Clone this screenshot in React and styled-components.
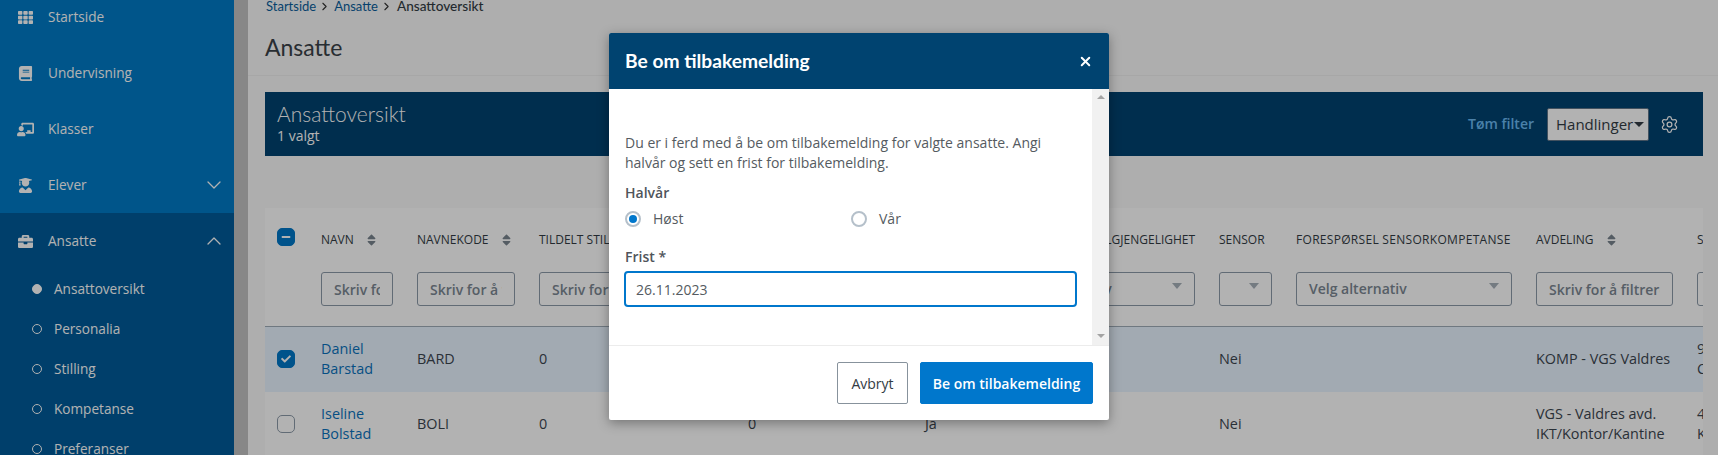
import React from 'react';
import styled, { createGlobalStyle } from 'styled-components';
import { FaTh, FaBook, FaChalkboardTeacher, FaUserGraduate, FaBriefcase, FaSort, FaCheck, FaMinus } from 'react-icons/fa';
import { ChevronDown, ChevronUp, ChevronRight, Settings, X } from 'lucide-react';

const BODY = `"Open Sans", "Noto Sans", sans-serif`;
const HEAD = `Lato, "Open Sans", sans-serif`;

const Global = createGlobalStyle`
  html, body { margin: 0; padding: 0; height: 455px; overflow: hidden; background: #f9f9f9; }
  #root { height: 455px; }
  * { box-sizing: border-box; }
`;

const Page = styled.div`
  position: relative; display: flex; width: 1718px; height: 455px; overflow: hidden;
  font-family: ${BODY}; font-size: 14px; line-height: 20px; color: #3c4650;
`;
const Sidebar = styled.nav`
  flex: 0 0 234px; background: #007ac6; color: #fff; overflow: hidden; display: flex; flex-direction: column;
`;
const NavList = styled.div` margin-top: -11px; display: flex; flex-direction: column; flex: none; `;
const NavItem = styled.div`
  height: 56px; display: flex; align-items: center; padding: 0 8px 0 17px; flex: none; font-size: 13.6px;
  svg.lead { width: 17px; height: 15px; margin-right: 14px; flex: none; }
  span { flex: 1; }
`;
const NavGroup = styled.div` background: #005b9a; display: flex; flex-direction: column; height: 300px; flex: none; `;
const SubItem = styled.div`
  height: 40px; display: flex; align-items: center; padding-left: 32px; gap: 12px; font-size: 13.6px; flex: none;
`;
const Bullet = styled.i`
  width: 10px; height: 10px; border-radius: 50%; border: 1.5px solid #fff; flex: none;
  background: ${p => (p.$on ? '#fff' : 'transparent')};
`;
const Gutter = styled.div` flex: 0 0 14px; background: #c2c2c2; `;
const Main = styled.main` flex: 1; min-width: 0; display: flex; flex-direction: column; overflow: hidden; `;
const Crumbs = styled.div`
  flex: none; height: 12px; padding-left: 18px; display: flex; align-items: center; font-family: ${HEAD}; font-size: 13px; color: #333c44;
  a { color: #0a5e9c; }
  svg { margin: 0 3px 0 2px; color: #333; flex: none; }
  b { font-weight: 500; font-size: 13.6px; margin-left: 1px; }
`;
const Title = styled.h1`
  flex: none; margin: 0; height: 64px; padding: 17px 0 0 17px; font-family: ${HEAD}; font-size: 23px; line-height: 36px; font-weight: 400;
  color: #3a4148; border-bottom: 1px solid #f0f0f0;
`;
const Content = styled.div` flex: none; padding: 16px 15px 0 17px; display: flex; flex-direction: column; gap: 52px; `;
const Banner = styled.section`
  height: 64px; flex: none; background: #004270; color: #fff; display: flex; align-items: center; padding: 0 24px 0 12px;
`;
const BannerText = styled.div`
  flex: 1; font-size: 14px;
  h2 { margin: 0; font-family: ${HEAD}; font-weight: 300; font-size: 21px; line-height: 24px; }
  p { margin: 0; line-height: 20px; }
`;
const ClearLink = styled.a` color: #6cb9f2; font-weight: 600; margin-right: 13px; font-size: 14px; `;
const ActionButton = styled.div`
  width: 102px; height: 33px; background: #fff; border: 1px solid #5f7588; border-radius: 2px; display: flex; align-items: center;
  justify-content: flex-start; padding-left: 8px; font-size: 15px; color: #333c44; margin-right: 11px;
  i { border: 5px solid transparent; border-top-color: #333c44; border-bottom: 0; margin-left: 1px; }
`;
const Panel = styled.section` background: #fff; overflow: hidden; height: 300px; flex: none; `;
const Table = styled.table`
  border-collapse: collapse; table-layout: fixed; width: 1600px; font-size: 14.4px; color: #3c4650;
`;
const Th = styled.th`
  height: 64px; padding: 0; text-align: left; font-size: 12px; white-space: nowrap; text-transform: uppercase;
  color: #333c44; vertical-align: middle; font-weight: 500; letter-spacing: ${p => p.$track || 0}px;
  svg { color: #79848e; margin-left: 12px; width: 11px; height: 14px; vertical-align: -3px; }
`;
const FilterCell = styled.td` height: 54px; padding: 0 24px 20px 0; vertical-align: top; border-bottom: 1px solid #a0acb8; `;
const FilterInput = styled.input`
  display: block; width: 100%; height: 34px; border: 1px solid #8c9aa8; border-radius: 3px; padding: 0 12px; background: #fff; outline: none;
  font-family: ${BODY}; font-size: 14px; font-weight: 600;
  &::placeholder { color: #7b8792; opacity: 1; }
`;
const FilterSelect = styled.div`
  height: 34px; border: 1px solid #8c9aa8; border-radius: 3px; padding: 0 12px; display: flex; align-items: center; justify-content: space-between;
  font-weight: 600; color: #7b8792; font-size: 14px;
  i { border: 5px solid transparent; border-top: 6px solid #a7b0b9; border-bottom: 0; margin: 0 0 6px auto; }
`;
const Row = styled.tr` background: ${p => (p.$on ? '#e9f4ff' : '#fff')}; `;
const Td = styled.td` height: 65px; padding: 0 12px 0 0; vertical-align: middle; line-height: 20px; `;
const CheckCell = styled.td` padding: 0 0 0 12px; vertical-align: middle; `;
const CheckHead = styled(Th)` padding: 0 0 6px 12px; `;
const Check = styled.span`
  display: flex; width: 18px; height: 18px; border-radius: 5px; align-items: center; justify-content: center;
  background: ${p => (p.$on ? '#0077c8' : '#fff')}; border: 1px solid ${p => (p.$on ? '#0077c8' : '#8c9aa8')};
  svg { color: #fff; width: 10px; height: 10px; margin: 0; vertical-align: baseline; }
`;
const NameLink = styled.a` color: #0a72bd; `;

const Overlay = styled.div` position: absolute; inset: 0; background: rgba(0, 0, 0, 0.3); `;
const Modal = styled.div`
  position: absolute; left: 609px; top: 33px; width: 500px; height: 387px; background: #fff; border-radius: 2px;
  box-shadow: 0 3px 12px rgba(0, 0, 0, 0.35); display: flex; flex-direction: column; overflow: hidden;
`;
const ModalHeader = styled.header`
  flex: none; height: 56px; background: #004370; color: #fff; display: flex; align-items: center; justify-content: space-between; padding: 0 16px;
  h3 { margin: 0; font-family: ${HEAD}; font-size: 19.2px; font-weight: 700; }
`;
const ModalBody = styled.div` flex: none; height: 256px; display: flex; `;
const ModalContent = styled.div` flex: 1; padding: 44px 15px 0 16px; color: #555b61; `;
const Para = styled.p` margin: 0 0 10px; `;
const Label = styled.div` font-weight: 600; color: #4f555b; height: 20px; `;
const RadioGroup = styled.div` display: grid; grid-template-columns: 1fr 1fr; margin: 6px 0 18px; height: 20px; `;
const Radio = styled.label`
  display: flex; align-items: center; gap: 12px;
  i { width: 16px; height: 16px; border-radius: 50%; border: 2px solid #b5c0ca; display: flex; align-items: center; justify-content: center; }
  i::after { content: ''; width: 8px; height: 8px; border-radius: 50%; background: ${p => (p.$on ? '#0077cc' : 'transparent')}; }
`;
const DateInput = styled.input`
  display: block; margin: 4px 0 0 -1px; width: calc(100% + 1px); height: 36px; border: 2px solid #0077cc; border-radius: 4px; padding: 0 10px; outline: none;
  font-family: ${BODY}; font-size: 14px; color: #555b61;
`;
const Scrollbar = styled.div`
  flex: 0 0 17px; background: #f1f1f1; display: flex; flex-direction: column; justify-content: space-between; align-items: center; padding: 6px 0 7px;
`;
const ScrollArrow = styled.i`
  border: 4px solid transparent; border-bottom: ${p => (p.$up ? '4px solid #a3a3a3' : '0')}; border-top: ${p => (p.$up ? '0' : '4px solid #a3a3a3')};
`;
const ModalFooter = styled.footer`
  flex: 1; border-top: 1px solid #ececec; display: flex; justify-content: flex-end; gap: 12px; padding: 16px;
`;
const Button = styled.button`
  height: 42px; border-radius: 2px; font-family: ${BODY}; font-size: 14px; padding: 0; width: ${p => p.$w}px;
  background: ${p => (p.$primary ? '#0077cc' : '#fff')}; color: ${p => (p.$primary ? '#fff' : '#333c44')};
  border: 1px solid ${p => (p.$primary ? '#0077cc' : '#87929c')}; font-weight: ${p => (p.$primary ? 600 : 400)};
`;

const cols = [56, 96, 122, 209, 177, 76, 218, 77, 240, 161, 120];
const heads = [
  ['Navn', true], ['Navnekode', true], ['Tildelt stilling', true], ['Tilgjengelig', true], ['Status', false],
  ['Undervisningstilgjengelighet', false], ['Sensor', false], ['Forespørsel sensorkompetanse', false, 0.3], ['Avdeling', true], ['Stilling', false],
];
const filters = [
  ['i', 'Skriv for å filtrere'], ['i', 'Skriv for å filtrere'], ['i', 'Skriv for å filtrere'], ['i', 'Skriv for å filtrere'], ['i', 'Skriv for å filtrere'],
  ['s', 'Velg alternativ'], ['s', ''], ['s', 'Velg alternativ'], ['i', 'Skriv for å filtrere'], ['i', 'Skriv for å filtrere'],
];
const rows = [
  { on: true, name: ['Daniel', 'Barstad'], code: 'BARD', a: '0', b: '0', c: 'Ja', sensor: 'Nei', dept: ['KOMP - VGS Valdres'], last: ['9', 'C'] },
  { on: false, name: ['Iseline', 'Bolstad'], code: 'BOLI', a: '0', b: '0', c: 'Ja', sensor: 'Nei', dept: ['VGS - Valdres avd.', 'IKT/Kontor/Kantine'], last: ['4', 'K'] },
];

const lines = arr => arr.map((t, i) => <React.Fragment key={t}>{i > 0 && <br />}{t}</React.Fragment>);

export default function App() {
  return (
    <Page>
      <Global />
      <Sidebar>
        <NavList>
          <NavItem><FaTh className="lead" /><span>Startside</span></NavItem>
          <NavItem><FaBook className="lead" /><span>Undervisning</span></NavItem>
          <NavItem><FaChalkboardTeacher className="lead" /><span>Klasser</span></NavItem>
          <NavItem><FaUserGraduate className="lead" /><span>Elever</span><ChevronDown size={24} strokeWidth={1.3} /></NavItem>
          <NavGroup>
            <NavItem><FaBriefcase className="lead" /><span>Ansatte</span><ChevronUp size={24} strokeWidth={1.3} /></NavItem>
            <SubItem><Bullet $on />Ansattoversikt</SubItem>
            <SubItem><Bullet />Personalia</SubItem>
            <SubItem><Bullet />Stilling</SubItem>
            <SubItem><Bullet />Kompetanse</SubItem>
            <SubItem><Bullet />Preferanser</SubItem>
          </NavGroup>
        </NavList>
      </Sidebar>
      <Gutter />
      <Main>
        <Crumbs>
          <a>Startside</a><ChevronRight size={13} strokeWidth={2} /><a>Ansatte</a><ChevronRight size={13} strokeWidth={2} /><b>Ansattoversikt</b>
        </Crumbs>
        <Title>Ansatte</Title>
        <Content>
          <Banner>
            <BannerText><h2>Ansattoversikt</h2><p>1 valgt</p></BannerText>
            <ClearLink>Tøm filter</ClearLink>
            <ActionButton>Handlinger<i /></ActionButton>
            <Settings size={19} strokeWidth={1.6} color="#fff" />
          </Banner>
          <Panel>
            <Table>
              <colgroup>{cols.map((w, i) => <col key={i} style={{ width: w }} />)}</colgroup>
              <thead>
                <tr>
                  <CheckHead><Check $on><FaMinus /></Check></CheckHead>
                  {heads.map(([t, sort, track]) => <Th key={t} $track={track}>{t}{sort && <FaSort />}</Th>)}
                  <Th />
                </tr>
                <tr>
                  <FilterCell />
                  {filters.map(([k, t], i) => (
                    <FilterCell key={i}>
                      {k === 'i' ? <FilterInput placeholder={t} readOnly /> : <FilterSelect>{t}<i /></FilterSelect>}
                    </FilterCell>
                  ))}
                  <FilterCell />
                </tr>
              </thead>
              <tbody>
                {rows.map(r => (
                  <Row key={r.code} $on={r.on}>
                    <CheckCell><Check $on={r.on}>{r.on && <FaCheck />}</Check></CheckCell>
                    <Td><NameLink>{lines(r.name)}</NameLink></Td>
                    <Td>{r.code}</Td>
                    <Td>{r.a}</Td>
                    <Td>{r.b}</Td>
                    <Td>{r.c}</Td>
                    <Td />
                    <Td>{r.sensor}</Td>
                    <Td />
                    <Td>{lines(r.dept)}</Td>
                    <Td>{lines(r.last)}</Td>
                    <Td />
                  </Row>
                ))}
              </tbody>
            </Table>
          </Panel>
        </Content>
      </Main>
      <Overlay />
      <Modal>
        <ModalHeader><h3>Be om tilbakemelding</h3><X size={15} strokeWidth={3.2} /></ModalHeader>
        <ModalBody>
          <ModalContent>
            <Para>Du er i ferd med å be om tilbakemelding for valgte ansatte. Angi halvår og sett en frist for tilbakemelding.</Para>
            <Label>Halvår</Label>
            <RadioGroup>
              <Radio $on><i />Høst</Radio>
              <Radio><i />Vår</Radio>
            </RadioGroup>
            <Label>Frist *</Label>
            <DateInput defaultValue="26.11.2023" />
          </ModalContent>
          <Scrollbar><ScrollArrow $up /><ScrollArrow /></Scrollbar>
        </ModalBody>
        <ModalFooter>
          <Button $w={71}>Avbryt</Button>
          <Button $primary $w={173}>Be om tilbakemelding</Button>
        </ModalFooter>
      </Modal>
    </Page>
  );
}
